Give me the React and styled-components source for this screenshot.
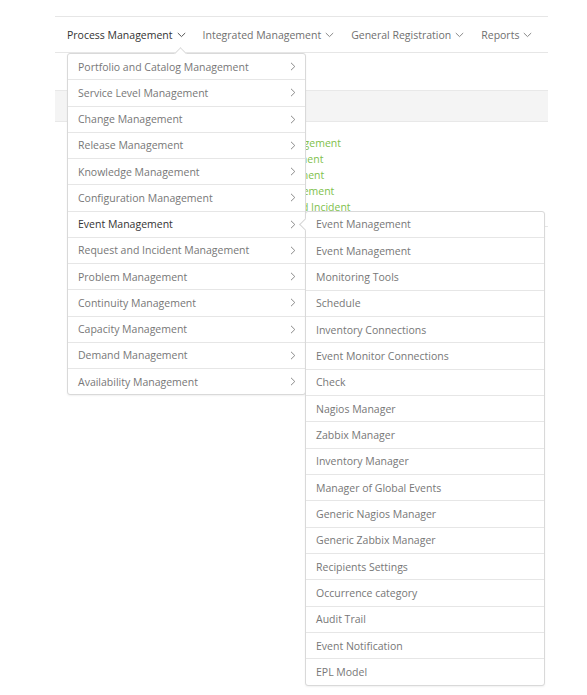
import * as React from "react";
import styled, { createGlobalStyle } from "styled-components";

const GlobalStyle = createGlobalStyle`
  html, body {
    margin: 0;
    padding: 0;
    background: #ffffff;
    font-family: "Open Sans", "DejaVu Sans", sans-serif;
  }
  #root {
    min-height: 100vh;
  }
`;

const Page = styled.div`
  box-sizing: border-box;
  width: 493px;
  min-height: 100vh;
  margin-left: 55px;
  padding-top: 16px;
`;

const Nav = styled.nav`
  display: flex;
  height: 35px;
  border-top: 1px solid #e6e6e6;
  border-bottom: 1px solid #e6e6e6;
`;

const NavItem = styled.div`
  position: relative;
  display: flex;
  align-items: center;
  gap: 4px;
  padding: 0 5px 0 12px;
  font-size: 10.5px;
  color: ${(p) => (p.$active ? "#333333" : "#6f6f6f")};
  white-space: nowrap;
`;

const Content = styled.div`
  padding-top: 37px;
`;

const Band = styled.div`
  height: 30px;
  background: #f4f4f4;
  border-top: 1px solid #e8e8e8;
  border-bottom: 1px solid #e8e8e8;
`;

const Section = styled.div`
  padding-left: 192px;
`;

const LinkList = styled.ul`
  list-style: none;
  margin: 13px 0 0;
  padding: 0;
`;

const LinkItem = styled.li`
  height: 16px;
  line-height: 16px;
  font-size: 10.5px;
  color: #80bf4c;
  white-space: nowrap;
`;

const Rule = styled.div`
  margin-top: 11px;
  border-top: 1px solid #e6e6e6;
`;

const Menu = styled.div`
  position: absolute;
  top: calc(100% + 1px);
  left: 12px;
  width: 237px;
  background: #ffffff;
  border: 1px solid #d9d9d9;
  border-radius: 3px;
  box-shadow: 0 1px 2px rgba(0, 0, 0, 0.06);
  z-index: 10;
`;

const UpCaret = styled.div`
  position: absolute;
  top: -5px;
  left: 108px;
  width: 8px;
  height: 8px;
  background: #ffffff;
  border-left: 1px solid #dcdcdc;
  border-top: 1px solid #dcdcdc;
  transform: rotate(45deg);
`;

const Row = styled.div`
  position: relative;
  display: flex;
  align-items: center;
  justify-content: space-between;
  height: 25.25px;
  padding: 0 9px 0 10px;
  font-size: 10.5px;
  color: ${(p) => (p.$active ? "#333333" : "#777777")};
  white-space: nowrap;
  & + & {
    border-top: 1px solid #e6e6e6;
  }
`;

const SubMenu = styled.div`
  position: absolute;
  top: -1px;
  left: 100%;
  width: 238px;
  background: #ffffff;
  border: 1px solid #d9d9d9;
  border-radius: 3px;
  box-shadow: 0 1px 2px rgba(0, 0, 0, 0.06);
  z-index: 11;
`;

const LeftCaret = styled.div`
  position: absolute;
  top: 8px;
  left: -5px;
  width: 8px;
  height: 8px;
  background: #ffffff;
  border-left: 1px solid #d4d4d4;
  border-bottom: 1px solid #d4d4d4;
  transform: rotate(45deg);
`;

const SubRow = styled(Row)`
  position: static;
  height: 25.35px;
`;

const Chevron = ({ dir = "right", color = "#8a8a8a" }) =>
  dir === "down" ? (
    <svg width="9" height="6" viewBox="0 0 9 6" fill="none">
      <polyline points="0.8,1 4.5,4.6 8.2,1" stroke={color} strokeWidth="1" />
    </svg>
  ) : (
    <svg width="6" height="9" viewBox="0 0 6 9" fill="none">
      <polyline points="1,0.8 4.8,4.5 1,8.2" stroke={color} strokeWidth="1" />
    </svg>
  );

const navItems = [
  "Process Management",
  "Integrated Management",
  "General Registration",
  "Reports",
];

const processItems = [
  "Portfolio and Catalog Management",
  "Service Level Management",
  "Change Management",
  "Release Management",
  "Knowledge Management",
  "Configuration Management",
  "Event Management",
  "Request and Incident Management",
  "Problem Management",
  "Continuity Management",
  "Capacity Management",
  "Demand Management",
  "Availability Management",
];

const eventItems = [
  "Event Management",
  "Event Management",
  "Monitoring Tools",
  "Schedule",
  "Inventory Connections",
  "Event Monitor Connections",
  "Check",
  "Nagios Manager",
  "Zabbix Manager",
  "Inventory Manager",
  "Manager of Global Events",
  "Generic Nagios Manager",
  "Generic Zabbix Manager",
  "Recipients Settings",
  "Occurrence category",
  "Audit Trail",
  "Event Notification",
  "EPL Model",
];

const pageLinks = [
  "Asset Management",
  "IT Management",
  "CI Management",
  "Risk Management",
  "Request and Incident",
];

export default function App() {
  return (
    <>
      <GlobalStyle />
      <Page>
        <Nav>
          {navItems.map((label, i) => (
            <NavItem key={label} $active={i === 0}>
              {label}
              <Chevron dir="down" color={i === 0 ? "#555" : "#888"} />
              {i === 0 && (
                <Menu>
                  <UpCaret />
                  {processItems.map((item) => (
                    <Row key={item} $active={item === "Event Management"}>
                      {item}
                      <Chevron />
                      {item === "Event Management" && (
                        <SubMenu>
                          <LeftCaret />
                          {eventItems.map((sub, j) => (
                            <SubRow key={j}>{sub}</SubRow>
                          ))}
                        </SubMenu>
                      )}
                    </Row>
                  ))}
                </Menu>
              )}
            </NavItem>
          ))}
        </Nav>
        <Content>
          <Band />
          <Section>
            <LinkList>
              {pageLinks.map((l) => (
                <LinkItem key={l}>{l}</LinkItem>
              ))}
            </LinkList>
            <Rule />
          </Section>
        </Content>
      </Page>
    </>
  );
}
